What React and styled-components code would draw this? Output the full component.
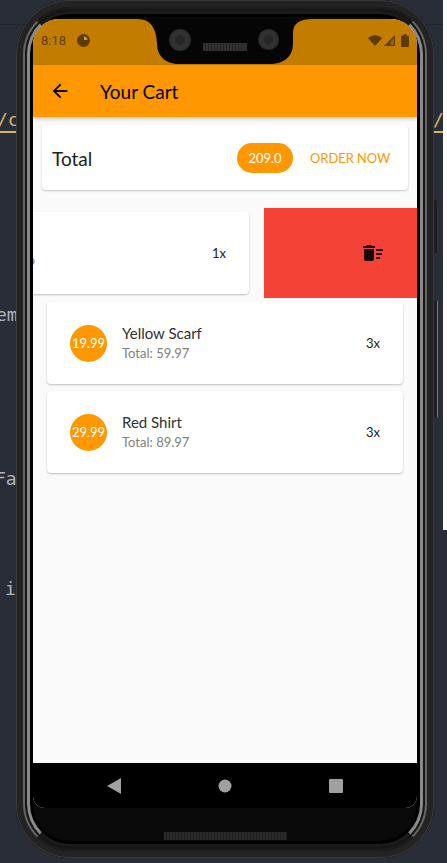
import React from "react";
import styled, { createGlobalStyle } from "styled-components";
import { MdArrowBack, MdDeleteSweep } from "react-icons/md";

const GlobalStyle = createGlobalStyle`
  html, body {
    margin: 0;
    padding: 0;
    background: #282d38;
  }
  * {
    box-sizing: border-box;
  }
`;

const Stage = styled.div`
  position: relative;
  width: 447px;
  height: 863px;
  overflow: hidden;
  background: #282d38;
  padding: 0 13px 5px 16px;
`;

const EditorLine = styled.div`
  position: absolute;
  left: 0;
  right: 0;
  top: 24px;
  height: 1px;
  background: #20242d;
`;

const CodeBit = styled.span`
  position: absolute;
  left: ${props => props.x}px;
  top: ${props => props.y}px;
  font-family: "DejaVu Sans Mono", monospace;
  font-size: 18px;
  line-height: 23px;
  color: ${props => props.color || "#aeb4bf"};
  border-bottom: ${props => (props.underline ? "2px solid #d9b36c" : "none")};
`;

const WindowEdge = styled.div`
  position: absolute;
  right: 0;
  top: 0;
  width: 4px;
  height: 530px;
  background: #ffffff;
`;

const SideButton = styled.div`
  position: absolute;
  left: 433px;
  top: ${props => props.top}px;
  width: 5px;
  height: ${props => props.height}px;
  border-radius: 0 2px 2px 0;
  background: #1d1e20;
  border-right: 1px solid ${props => props.edge};
`;

const Phone = styled.div`
  position: relative;
  width: 418px;
  height: 858px;
  border-radius: 54px;
  padding: 19px 17px 50px;
  background: #0a0a0a;
  box-shadow:
    inset 0 0 0 1px #3a3a3a,
    inset 0 0 0 7px #232323,
    inset 0 0 0 11px #161616,
    inset 0 0 0 17px #000000;
`;

const Ring = styled.div`
  position: absolute;
  inset: ${props => props.inset}px;
  border-radius: ${props => 54 - props.inset}px;
  border-style: solid;
  border-width: ${props => props.size}px;
  border-color: #1c1c1c ${props => props.shade};
`;

const Screen = styled.div`
  position: relative;
  height: 100%;
  display: flex;
  flex-direction: column;
  background: #fafafa;
  border-radius: 26px 26px 12px 12px;
  overflow: hidden;
`;

const StatusBar = styled.div`
  height: 46px;
  flex-shrink: 0;
  display: flex;
  align-items: center;
  justify-content: space-between;
  padding: 0 8px 3px 8px;
  background: #c27c00;
  color: #5e3c00;
  font-family: Roboto, sans-serif;
  font-size: 13px;
`;

const StatusGroup = styled.div`
  display: flex;
  align-items: center;
  gap: ${props => props.gap}px;
`;

const Notch = styled.svg`
  position: absolute;
  left: 105px;
  top: 0;
  width: 175px;
  height: 46px;
`;

const AppBar = styled.header`
  position: relative;
  z-index: 2;
  height: 52px;
  flex-shrink: 0;
  display: flex;
  align-items: center;
  gap: 29px;
  padding-left: 16px;
  background: #ff9800;
  box-shadow: 0 2px 4px rgba(0, 0, 0, 0.2);
  color: #000000;
`;

const AppTitle = styled.h1`
  margin: 0;
  font-family: Lato, sans-serif;
  font-size: 19px;
  font-weight: 400;
`;

const Body = styled.main`
  flex: 1;
  min-height: 0;
  display: flex;
  flex-direction: column;
  padding-top: 8px;
`;

const TotalCard = styled.section`
  height: 65px;
  margin: 0 9px;
  display: flex;
  align-items: center;
  padding: 0 18px 0 10px;
  background: #ffffff;
  border-radius: 4px;
  box-shadow: 0 1px 2px rgba(0, 0, 0, 0.22);
`;

const TotalLabel = styled.span`
  flex: 1;
  padding-top: 2px;
  font-family: Lato, sans-serif;
  font-size: 19px;
  color: #212121;
`;

const Chip = styled.span`
  width: 56px;
  height: 30px;
  display: flex;
  align-items: center;
  justify-content: center;
  border-radius: 15px;
  background: #ff9800;
  color: #ffffff;
  font-family: Lato, sans-serif;
  font-size: 13px;
`;

const OrderButton = styled.button`
  width: 80px;
  margin-left: 17px;
  padding: 0;
  border: 0;
  background: none;
  color: #ff9800;
  font-family: Lato, sans-serif;
  font-size: 12.9px;
  white-space: nowrap;
  text-transform: uppercase;
`;

const SwipeRow = styled.div`
  height: 90px;
  margin-top: 18px;
  display: flex;
  overflow: hidden;
  flex-shrink: 0;
`;

const SlidOff = styled.div`
  flex-shrink: 0;
  width: 356px;
  margin-left: -140px;
  margin-right: 15px;
  padding: 4px 0;
`;

const DeleteBack = styled.div`
  flex: 1;
  display: flex;
  align-items: center;
  justify-content: flex-end;
  padding-right: 32px;
  background: #f44336;
  color: #1a0505;
`;

const ItemCard = styled.article`
  height: 82px;
  display: flex;
  align-items: center;
  padding: 0 23px;
  background: #ffffff;
  border-radius: 4px;
  box-shadow: 0 1px 2px rgba(0, 0, 0, 0.24);
`;

const CardSlot = styled.div`
  margin: ${props => props.top}px 14px 0;
`;

const PriceBadge = styled.span`
  width: 37px;
  height: 37px;
  flex-shrink: 0;
  display: flex;
  align-items: center;
  justify-content: center;
  border-radius: 50%;
  background: #ff9800;
  color: #ffffff;
  font-family: Lato, sans-serif;
  font-size: 13px;
`;

const ItemText = styled.div`
  flex: 1;
  margin-left: 15px;
  margin-bottom: 2px;
  font-family: Lato, sans-serif;
`;

const ItemName = styled.div`
  font-size: 15px;
  line-height: 20px;
  color: #303030;
`;

const ItemTotal = styled.div`
  margin-top: 1px;
  font-size: 13px;
  line-height: 18px;
  color: #808080;
`;

const Quantity = styled.span`
  font-family: Lato, sans-serif;
  font-size: 13px;
  color: #212121;
`;

const NavBar = styled.nav`
  height: 45px;
  flex-shrink: 0;
  display: flex;
  align-items: center;
  justify-content: space-between;
  padding: 0 74px;
  background: #000000;
`;

const NavIcon = styled.svg`
  width: 14px;
  height: 16px;
  fill: #a0a0a0;
`;

const Speaker = styled.div`
  position: absolute;
  left: 148px;
  bottom: 18px;
  width: 123px;
  height: 8px;
  border-radius: 1px;
  background: repeating-linear-gradient(90deg, #2a2a2a 0 2px, #202020 2px 3px);
`;

const Camera = styled.span`
  position: absolute;
  left: ${props => props.x}px;
  top: ${props => props.y}px;
  width: ${props => props.size}px;
  height: ${props => props.size}px;
  border-radius: 50%;
  background: radial-gradient(circle, #262626 0 25%, #343434 45%, #2a2a2a 70%, #2e2e2e 100%);
`;

const Earpiece = styled.span`
  position: absolute;
  left: 170px;
  top: 24px;
  width: 44px;
  height: 8px;
  border-radius: 1px;
  background: repeating-linear-gradient(90deg, #333333 0 2px, #232323 2px 3px);
`;

const items = [
  { name: "Yellow Scarf", price: "19.99", total: "59.97", qty: "3x", top: 4 },
  { name: "Red Shirt", price: "29.99", total: "89.97", qty: "3x", top: 7 },
];

const CartItem = ({ item }) => (
  <ItemCard>
    <PriceBadge>{item.price}</PriceBadge>
    <ItemText>
      <ItemName>{item.name}</ItemName>
      <ItemTotal>Total: {item.total}</ItemTotal>
    </ItemText>
    <Quantity>{item.qty}</Quantity>
  </ItemCard>
);

const App = () => {
  return (
    <Stage>
      <GlobalStyle />
      <EditorLine />
      <CodeBit x={-3} y={108} color="#d9b36c" underline>
        /c
      </CodeBit>
      <CodeBit x={-4} y={303}>
        em
      </CodeBit>
      <CodeBit x={-5} y={467}>
        Fa
      </CodeBit>
      <CodeBit x={5} y={577}>
        i
      </CodeBit>
      <CodeBit x={433} y={108} color="#d9b36c" underline>
        /:
      </CodeBit>
      <WindowEdge />
      <SideButton top={200} height={53} edge="#333333" />
      <SideButton top={300} height={118} edge="#77797c" />
      <Phone>
        <Ring inset={7} size={2} shade="#666666" />
        <Ring inset={11} size={3} shade="#8a8a8a" />
        <Screen>
          <StatusBar>
            <StatusGroup gap={11}>
              <span>8:18</span>
              <svg width="13" height="13" viewBox="0 0 13 13">
                <circle cx="6.5" cy="6.5" r="6.5" fill="#5e3c00" />
                <path d="M7 2.500A4 4 0 0 1 10.500 6L7 6z" fill="#c99a4a" />
              </svg>
            </StatusGroup>
            <StatusGroup gap={2}>
              <svg width="14" height="11" viewBox="0 0 14 11">
                <path d="M0 3.200C3.800-.8 10.200-.8 14 3.200L7 11z" fill="#5e3c00" />
              </svg>
              <svg width="11" height="11" viewBox="0 0 11 11">
                <path d="M0 11L11 0v11z" fill="#5e3c00" />
                <path d="M6.500 10V6.500L10 3v7z" fill="#9a6300" />
              </svg>
              <svg width="8" height="13" viewBox="0 0 8 13" style={{ marginLeft: 4 }}>
                <path d="M2.500 0h3v1.500h1.500a1 1 0 0 1 1 1V12a1 1 0 0 1-1 1H1a1 1 0 0 1-1-1V2.500a1 1 0 0 1 1-1h1.500z" fill="#5e3c00" />
              </svg>
            </StatusGroup>
          </StatusBar>
          <Notch viewBox="0 0 175 46">
            <path
              d="M0 0H175C162 0 155 4 155 14V24C155 38 146 45 131 45H42C28 45 19 38 19 24C18 8 12 0 0 0Z"
              fill="#050505"
            />
          </Notch>
          <Camera x={136} y={10} size={22} />
          <Camera x={225} y={10} size={21} />
          <Earpiece />
          <AppBar>
            <MdArrowBack size={22} />
            <AppTitle>Your Cart</AppTitle>
          </AppBar>
          <Body>
            <TotalCard>
              <TotalLabel>Total</TotalLabel>
              <Chip>209.0</Chip>
              <OrderButton>Order now</OrderButton>
            </TotalCard>
            <SwipeRow>
              <SlidOff>
                <CartItem item={{ name: "Blue Hat", price: "19.99", total: "19.99", qty: "1x" }} />
              </SlidOff>
              <DeleteBack>
                <MdDeleteSweep size={24} />
              </DeleteBack>
            </SwipeRow>
            {items.map(item => (
              <CardSlot key={item.name} top={item.top}>
                <CartItem item={item} />
              </CardSlot>
            ))}
          </Body>
          <NavBar>
            <NavIcon viewBox="0 0 14 16">
              <path d="M14 0v16L0 8z" />
            </NavIcon>
            <NavIcon viewBox="0 0 14 16">
              <circle cx="7" cy="8" r="6.500" />
            </NavIcon>
            <NavIcon viewBox="0 0 14 16">
              <rect x="0" y="1" width="14" height="14" rx="1" />
            </NavIcon>
          </NavBar>
        </Screen>
        <Speaker />
      </Phone>
    </Stage>
  );
};

export default App;
